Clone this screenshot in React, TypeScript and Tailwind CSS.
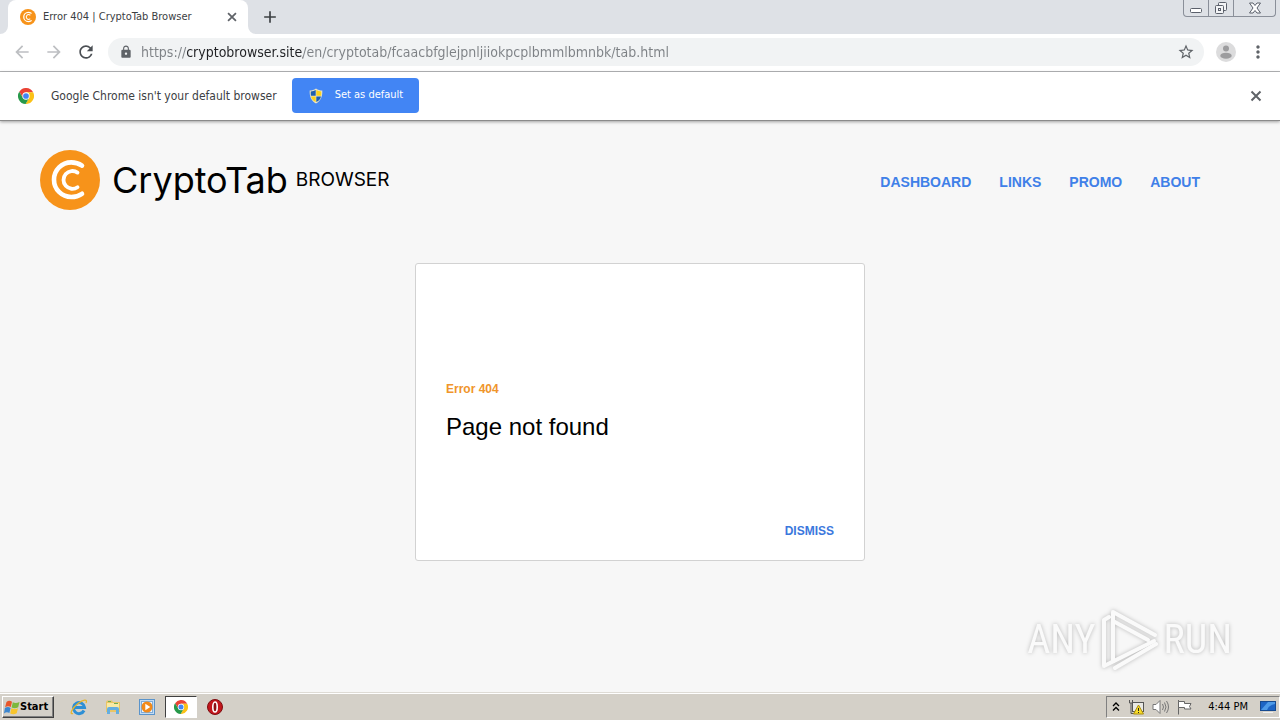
import { ReactNode } from "react"
import { MdAdd, MdArrowBack, MdArrowForward, MdLock, MdMoreVert, MdRefresh, MdStarBorder } from "react-icons/md"

const NAV_LINKS = ["Dashboard", "Links", "Promo", "About"]

function CryptoTabLogo({ className }: { className: string }) {
    return (
        <svg viewBox="0 0 60 60" className={className} fill="none" aria-hidden="true">
            <circle cx="30" cy="30" r="30" fill="#f7931a" />
            <g stroke="#fff" strokeLinecap="round">
                <path d="M42 15.6C38.5 13.2 35 12.4 31.3 12.4A17.3 17.3 0 0 0 31.3 47C35 47 38.5 46.2 42 43.8" strokeWidth="4.6" />
                <path d="M37.5 22.6A8.9 8.9 0 1 0 37.5 37.2" strokeWidth="3.8" />
            </g>
        </svg>
    )
}

function ChromeLogo({ className }: { className: string }) {
    return (
        <svg viewBox="0 0 24 24" className={className} aria-hidden="true">
            <path d="M1.9 5.51A12 12 0 0 1 22.67 6.5H12L7.24 14.75Z" fill="#ea4335" />
            <path d="M22.67 6.5A12 12 0 0 1 11.43 24L16.76 14.75L12 6.5Z" fill="#fbc116" />
            <path d="M11.43 24A12 12 0 0 1 1.9 5.51L7.24 14.75H16.76Z" fill="#27994a" />
            <circle cx="12" cy="12" r="5.5" fill="#fff" />
            <circle cx="12" cy="12" r="4.3" fill="#4285f4" />
        </svg>
    )
}

function CloseIcon({ className }: { className: string }) {
    return (
        <svg viewBox="0 0 16 16" className={className} stroke="currentColor" strokeWidth="2" aria-hidden="true">
            <path d="M3.5 3.5L12.5 12.5M12.5 3.5L3.5 12.5" />
        </svg>
    )
}

function ShieldIcon() {
    return (
        <svg viewBox="0 0 16 16" className="size-4" aria-hidden="true">
            <path d="M8 0.5C10 2 12 2.5 14.3 2.5C14.6 8.5 12.8 13 8 15.5C3.2 13 1.4 8.5 1.7 2.5C4 2.5 6 2 8 0.5Z" fill="#e8e4c8" />
            <path d="M7.7 2.1V7.8H2.9C2.7 6.5 2.7 5 2.8 3.6C4.7 3.5 6.3 3 7.7 2.1Z" fill="#1f5fae" />
            <path d="M8.3 2.1C9.7 3 11.3 3.5 13.2 3.6C13.3 5 13.3 6.5 13.1 7.8H8.3Z" fill="#fbd21c" />
            <path d="M3 8.4H7.7V14C5.1 12.6 3.5 10.7 3 8.4Z" fill="#fbd21c" />
            <path d="M8.3 8.4H13C12.5 10.7 10.9 12.6 8.3 14Z" fill="#1f5fae" />
        </svg>
    )
}

function TabStrip() {
    return (
        <div className="flex h-[34px] items-end bg-[#dee1e6]">
            <svg viewBox="0 0 8 8" className="size-2 fill-white" aria-hidden="true">
                <path d="M8 0V8H0A8 8 0 0 0 8 0Z" />
            </svg>
            <div className="flex h-full w-60 items-center rounded-t-lg bg-white pr-2 pl-3">
                <CryptoTabLogo className="size-4" />
                <span className="ml-[7px] flex-1 whitespace-nowrap text-[11px] text-[#3c4043]">
                    Error 404 | CryptoTab Browser
                </span>
                <button className="flex size-4 items-center justify-center text-[#5f6368]" aria-label="Close tab">
                    <CloseIcon className="size-[14px]" />
                </button>
            </div>
            <svg viewBox="0 0 8 8" className="size-2 fill-white" aria-hidden="true">
                <path d="M0 0V8H8A8 8 0 0 1 0 0Z" />
            </svg>
            <button className="ml-1 flex h-full w-5 items-center justify-center text-[#3c4043]" aria-label="New tab">
                <MdAdd className="size-5 shrink-0" />
            </button>
            <div className="mr-1 ml-auto flex h-[17px] self-start rounded-b-[4px] border border-t-0 border-[#8a8f99] text-[#5b606b]">
                <button className="flex w-6 items-center justify-center" aria-label="Minimize">
                    <svg viewBox="0 0 12 12" className="size-3" fill="#fff" stroke="currentColor" aria-hidden="true">
                        <rect x="0.5" y="6.5" width="11" height="4" rx="1" />
                    </svg>
                </button>
                <button className="flex w-[26px] items-center justify-center border-x border-[#8a8f99]" aria-label="Restore">
                    <svg viewBox="0 0 14 14" className="size-[14px]" fill="#f3f4f6" stroke="currentColor" aria-hidden="true">
                        <rect x="4.5" y="1.5" width="8" height="8" rx="1" />
                        <rect x="1.5" y="4.5" width="8" height="8" rx="1" />
                        <rect x="4.5" y="7.5" width="2" height="2" />
                    </svg>
                </button>
                <button className="flex w-[41px] items-center justify-center" aria-label="Close">
                    <svg viewBox="0 0 12 12" className="size-3" fill="#fff" stroke="currentColor" aria-hidden="true">
                        <path d="M0.5 1H4L6 3.5L8 1H11.5L8 6L11.5 11H8L6 8.5L4 11H0.5L4 6Z" />
                    </svg>
                </button>
            </div>
        </div>
    )
}

function Toolbar() {
    return (
        <div className="flex h-[38px] items-center border-b border-[#b5b6b8] bg-white px-3 pb-[2px]">
            <div className="flex gap-3 text-[#5f6368]">
                <button className="text-[#bdbfc2]" aria-label="Back">
                    <MdArrowBack className="size-5" />
                </button>
                <button className="text-[#bdbfc2]" aria-label="Forward">
                    <MdArrowForward className="size-5" />
                </button>
                <button className="text-[#4b4f54]" aria-label="Reload">
                    <MdRefresh className="size-5" />
                </button>
            </div>
            <div className="ml-3 flex h-7 flex-1 items-center rounded-full bg-[#f1f3f4] pr-[9px] pl-[11px] text-[#5f6368]">
                <MdLock className="size-[14px]" />
                <input
                    type="text"
                    aria-label="Address"
                    defaultValue="https://cryptobrowser.site/en/cryptotab/fcaacbfglejpnljiiokpcplbmmlbmnbk/tab.html"
                    className="ml-2 h-7 min-w-0 flex-1 bg-[linear-gradient(to_right,#7d8185_0_46px,#202124_46px_162px,#7d8185_162px)] bg-clip-text text-[14px] text-transparent outline-none"
                />
                <button aria-label="Bookmark this page">
                    <MdStarBorder className="size-[18px]" />
                </button>
            </div>
            <button className="ml-3 size-5" aria-label="Profile">
                <svg viewBox="0 0 20 20" className="size-5" aria-hidden="true">
                    <circle cx="10" cy="10" r="10" fill="#dcdcdd" />
                    <circle cx="10" cy="6.5" r="3" fill="#9c9c9e" />
                    <ellipse cx="10" cy="13.7" rx="5.7" ry="3" fill="#9c9c9e" />
                </svg>
            </button>
            <button className="ml-3 text-[#5f6368]" aria-label="Menu">
                <MdMoreVert className="size-5" />
            </button>
        </div>
    )
}

function DefaultBrowserBar() {
    return (
        <div className="relative z-10 flex h-[49px] items-center border-b border-[#8b8b8b] bg-white pr-4 pb-px pl-[18px] shadow-[0_1px_3px_rgba(0,0,0,0.35)]">
            <ChromeLogo className="size-4" />
            <span className="ml-[17px] text-[12px] text-[#3c4043]">Google Chrome isn't your default browser</span>
            <button className="ml-[15px] flex h-[35px] w-[127px] items-center gap-[11px] rounded-[4px] bg-[#4285f4] pl-4 text-[11px] whitespace-nowrap text-white">
                <ShieldIcon />
                Set as default
            </button>
            <button className="ml-auto text-[#5f6368]" aria-label="Close">
                <CloseIcon className="size-4" />
            </button>
        </div>
    )
}

function ErrorPage() {
    return (
        <main className="relative flex-1 bg-[#f7f7f7] font-['Liberation_Sans',Arial,sans-serif]">
            <header className="flex items-center justify-between pt-[29px] pr-20 pl-10">
                <a href="#" className="flex items-center font-[Inter,sans-serif] text-black">
                    <CryptoTabLogo className="size-[60px]" />
                    <span className="ml-3 text-[36px] leading-[60px]">CryptoTab</span>
                    <span className="ml-2 text-[19px]">BROWSER</span>
                </a>
                <nav className="flex gap-7 pt-1 text-[14px] font-bold text-[#4080e8] uppercase">
                    {NAV_LINKS.map((link) => (
                        <a key={link} href="#">
                            {link}
                        </a>
                    ))}
                </nav>
            </header>

            <section className="mx-auto mt-[53px] flex min-h-[298px] max-w-[450px] flex-col rounded-[3px] border border-[#d2d2d2] bg-white px-[30px] pt-[117px] pb-[19px]">
                <p className="text-[12px] leading-4 font-bold text-[#f0952b]">Error 404</p>
                <h1 className="mt-[14px] text-[24px] leading-8 text-black">Page not found</h1>
                <button className="mt-auto self-end text-[12px] leading-5 font-bold text-[#3b78dd]">DISMISS</button>
            </section>

            <Watermark />
        </main>
    )
}

function Watermark() {
    return (
        <div className="pointer-events-none absolute right-12 bottom-5 flex items-center gap-1 font-['Roboto_Condensed',Roboto,sans-serif] text-[40px] leading-[64px] text-[#fafafa] drop-shadow-[0_0_2px_rgba(0,0,0,0.25)]">
            <span>ANY</span>
            <svg viewBox="0 0 60 64" className="h-16 w-[60px]" fill="none" stroke="#fafafa" strokeWidth="4" strokeLinecap="round" strokeLinejoin="round" aria-hidden="true">
                <path d="M9 9L4 12V58L54 33" />
                <path d="M13 53V4L55 27" />
                <path d="M13 13L48 32" />
                <path d="M15 60L56 36" />
            </svg>
            <span>RUN</span>
        </div>
    )
}

function TaskButton({ label, active, children }: { label: string; active?: boolean; children: ReactNode }) {
    return (
        <button
            aria-label={label}
            className={
                active
                    ? "flex h-[22px] w-8 items-center justify-center border border-t-[#404040] border-r-white border-b-white border-l-[#404040] bg-white"
                    : "flex h-[22px] w-8 items-center justify-center"
            }
        >
            {children}
        </button>
    )
}

function Taskbar() {
    return (
        <footer className="flex h-7 items-center border-t border-[#dedbd5] bg-[#d4d0c8] pl-[2px] text-black shadow-[inset_0_1px_0_#fff]">
            <button className="flex h-[22px] w-[52px] items-center border border-t-white border-r-[#404040] border-b-[#404040] border-l-white pt-[2px] pl-px text-[11px] font-bold shadow-[inset_-1px_-1px_0_#808080]">
                <svg viewBox="0 0 16 16" className="size-4 shrink-0" aria-hidden="true">
                    <path d="M2.5 2C4.5 .3 6.3 .7 8 1.8L6.8 7C5 6 3.2 6 1.1 7.2Z" fill="#e8562a" />
                    <path d="M8.8 2.2C10.7 3.3 12.8 3.2 15.5 2L14.2 7.2C11.8 8.4 9.6 8.4 7.6 7.4Z" fill="#7cb83d" />
                    <path d="M.9 8C3 6.8 4.8 6.8 6.6 7.9L5.4 13C3.6 12 1.8 12.1 0 13.4Z" fill="#3c86cf" />
                    <path d="M7.4 8.3C9.5 9.4 11.6 9.4 14 8.2L12.7 13.3C10.3 14.6 8.1 14.4 6.2 13.4Z" fill="#f8c52c" />
                </svg>
                Start
            </button>

            <div className="ml-[9px] flex items-center gap-[2px]">
                <TaskButton label="Internet Explorer">
                    <svg viewBox="0 0 18 18" className="size-[18px]" fill="none" aria-hidden="true">
                        <path d="M14 12.5A5.5 5.5 0 1 1 14.5 9.5H5" stroke="#2d8fd5" strokeWidth="3" />
                        <path d="M3 15.5C-1 17 2 10 8 5.5C13 1.5 18 .5 16 5" stroke="#e7b52c" strokeWidth="1.3" />
                    </svg>
                </TaskButton>
                <TaskButton label="Windows Explorer">
                    <svg viewBox="0 0 16 16" className="size-4" aria-hidden="true">
                        <path d="M1 3L2 1.5H7L8 3H15V13H1Z" fill="#e9c565" />
                        <path d="M2 4H14V11H2Z" fill="#f9eaa4" />
                        <path d="M3 2.5H6M9 4.5H13" stroke="#6fae55" />
                        <path d="M2 15V10Q2 8 4 8H12Q14 8 14 10V15H11V11H5V15Z" fill="#64aee0" />
                    </svg>
                </TaskButton>
                <TaskButton label="Media Player">
                    <svg viewBox="0 0 16 16" className="size-4" aria-hidden="true">
                        <rect x=".5" y=".5" width="15" height="15" fill="#c3dcf3" stroke="#5a94cb" />
                        <rect x="2.5" y="2.5" width="11" height="11" fill="#eef6fd" stroke="#7facd8" />
                        <circle cx="8" cy="8" r="5.5" fill="#f28a1a" />
                        <path d="M6.3 4.8V11.2L11.3 8Z" fill="#fff" />
                    </svg>
                </TaskButton>
                <TaskButton label="Google Chrome" active>
                    <ChromeLogo className="size-[14px]" />
                </TaskButton>
                <TaskButton label="Opera">
                    <svg viewBox="0 0 16 16" className="size-4" aria-hidden="true">
                        <circle cx="8" cy="8" r="7.5" fill="#c3161c" stroke="#7d0d10" />
                        <ellipse cx="8" cy="8" rx="2.2" ry="5" fill="#8d1013" stroke="#fff" strokeWidth="1.6" />
                    </svg>
                </TaskButton>
            </div>

            <div className="ml-auto flex h-[22px] items-center border border-t-[#808080] border-r-white border-b-white border-l-[#808080] pt-px pr-[3px] pl-[5px] text-[11px]">
                <button aria-label="Show hidden icons">
                    <svg viewBox="0 0 8 10" className="h-[10px] w-2" fill="none" stroke="#000" strokeWidth="1.3" aria-hidden="true">
                        <path d="M1 4L4 1L7 4M1 8.5L4 5.5L7 8.5" />
                    </svg>
                </button>
                <svg viewBox="0 0 16 16" className="ml-2 size-4" aria-hidden="true">
                    <rect x="4.5" y="3.5" width="11" height="9" fill="#e9e9e4" stroke="#555" />
                    <path d="M1.5 1V4H4.5V1M3 4V14.5H8" fill="none" stroke="#555" />
                    <path d="M10.5 6L15.5 15H5.5Z" fill="#f8dc28" stroke="#a98c10" />
                    <path d="M10.5 9V12M10.5 13V14" stroke="#222" />
                </svg>
                <svg viewBox="0 0 18 16" className="ml-2 h-4 w-[18px]" fill="none" stroke="#777" aria-hidden="true">
                    <path d="M1 5.5H4L8 1.5V14.5L4 10.5H1Z" fill="#fff" />
                    <path d="M10.5 5Q12.5 8 10.5 11M12.5 3.5Q15.5 8 12.5 12.5M14.5 2Q18.5 8 14.5 14" />
                </svg>
                <svg viewBox="0 0 16 16" className="ml-[6px] size-4" stroke="#666" fill="#fff" aria-hidden="true">
                    <path d="M2.5 1V15.5" />
                    <path d="M2.5 2.5H8.5V4.5H15L13.5 7.5L15 10H8.5V8.5H2.5Z" />
                </svg>
                <time className="ml-4">4:44 PM</time>
                <button className="ml-3" aria-label="Show desktop">
                    <svg viewBox="0 0 16 14" className="h-[14px] w-4" aria-hidden="true">
                        <rect x=".5" y="1.5" width="15" height="9" fill="#1d64c4" stroke="#164a90" />
                        <path d="M1 10L8 2H15V4Q9 5 7 10Z" fill="#4d9ae8" />
                        <path d="M3 12.5H13" stroke="#efefef" />
                    </svg>
                </button>
            </div>
        </footer>
    )
}

export default function App() {
    return (
        <div className="flex min-h-screen flex-col font-[Tahoma,'DejaVu_Sans_Condensed','Open_Sans',sans-serif]">
            <TabStrip />
            <Toolbar />
            <DefaultBrowserBar />
            <ErrorPage />
            <Taskbar />
        </div>
    )
}
